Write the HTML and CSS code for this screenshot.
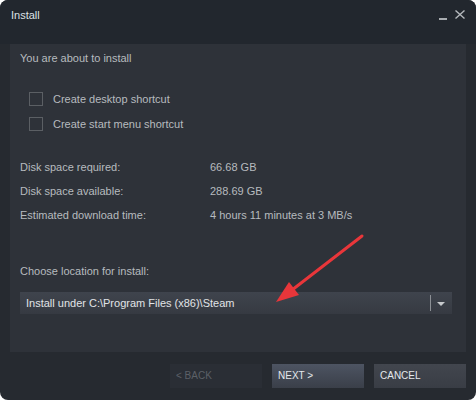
FILE: index.html
```html
<!DOCTYPE html>
<html>
<head>
<meta charset="utf-8">
<link rel="stylesheet" href="styles.css">
</head>
<body>
<div class="window">
  <div class="titlebar">
    <span class="title">Install</span>
    <div class="controls">
      <span class="min"></span>
      <svg class="close" width="10" height="9" viewBox="0 0 10 9"><path d="M0.5 0.5 L9.5 8.5 M9.5 0.5 L0.5 8.5" stroke="#b3b7bb" stroke-width="1.4" fill="none"/></svg>
    </div>
  </div>
  <div class="panel">
    <div class="intro">You are about to install</div>
    <div class="options">
      <label class="opt"><span class="box"></span>Create desktop shortcut</label>
      <label class="opt"><span class="box"></span>Create start menu shortcut</label>
    </div>
    <div class="info">
      <div class="row"><span class="key">Disk space required:</span><span class="val">66.68 GB</span></div>
      <div class="row"><span class="key">Disk space available:</span><span class="val">288.69 GB</span></div>
      <div class="row"><span class="key">Estimated download time:</span><span class="val">4 hours 11 minutes at 3 MB/s</span></div>
    </div>
    <div class="choose">Choose location for install:</div>
    <div class="dropdown">
      <span class="dd-text">Install under C:\Program Files (x86)\Steam</span>
      <span class="dd-sep"></span>
      <span class="dd-arrow"></span>
    </div>
  </div>
  <div class="footer">
    <div class="btn back">&lt; BACK</div>
    <div class="btn next">NEXT &gt;</div>
    <div class="btn cancel">CANCEL</div>
  </div>
  <svg class="annot" width="476" height="400" viewBox="0 0 476 400">
    <line x1="362" y1="236" x2="292" y2="290" stroke="#e8363a" stroke-width="3" stroke-linecap="round"/>
    <polygon points="276,302 289,282 299,295" fill="#e8363a"/>
  </svg>
</div>
</body>
</html>
```
FILE: styles.css
```css
html, body {
  margin: 0;
  padding: 0;
  background: #ffffff;
}
body {
  font-family: "Liberation Sans", Arial, sans-serif;
  font-size: 11px;
}
.window {
  position: relative;
  width: 476px;
  height: 400px;
  background: #262a30;
  border-radius: 8px;
  overflow: hidden;
  display: flex;
  flex-direction: column;
}
.titlebar {
  height: 44px;
  flex: none;
  background: #22272e;
  display: flex;
  justify-content: space-between;
  align-items: flex-start;
  padding: 8px 11px 0 11px;
  box-sizing: border-box;
}
.title {
  color: #dde2e7;
  font-size: 11px;
  line-height: 14px;
}
.controls {
  display: flex;
  align-items: flex-start;
  gap: 8px;
  padding-top: 2px;
}
.min {
  display: block;
  width: 8px;
  height: 2px;
  background: #a9adb1;
  margin-top: 8px;
}
.close {
  display: block;
}
.panel {
  margin: 0 10px;
  height: 308px;
  flex: none;
  background: #2e3239;
  padding: 7px 14px 0 10px;
  box-sizing: border-box;
  color: #b7bbbf;
}
.intro {
  line-height: 14px;
}
.options {
  margin: 27px 0 0 9px;
  display: flex;
  flex-direction: column;
  gap: 11px;
}
.opt {
  display: flex;
  align-items: center;
  gap: 10px;
  line-height: 14px;
}
.box {
  width: 14px;
  height: 14px;
  box-sizing: border-box;
  border: 1px solid #5b5f64;
  flex: none;
}
.info {
  margin-top: 24px;
}
.row {
  display: flex;
  line-height: 24px;
}
.key {
  width: 190px;
  flex: none;
}
.choose {
  margin-top: 37px;
  line-height: 14px;
}
.dropdown {
  margin-top: 14px;
  height: 22px;
  background: linear-gradient(#3f444d, #363a42);
  display: flex;
  align-items: center;
  padding-left: 6px;
}
.dd-text {
  flex: 1;
  color: #e1e4e7;
}
.dd-sep {
  width: 1px;
  height: 16px;
  background: #8c9095;
}
.dd-arrow {
  width: 0;
  height: 0;
  border-left: 4px solid transparent;
  border-right: 4px solid transparent;
  border-top: 4px solid #c6c9cc;
  margin: 2px 7px 0 6px;
}
.footer {
  display: flex;
  justify-content: flex-end;
  gap: 10px;
  padding: 12px 10px 0 0;
}
.btn {
  width: 92px;
  height: 24px;
  box-sizing: border-box;
  padding-left: 6px;
  line-height: 24px;
  font-size: 10px;
}
.back {
  background: #2a2e35;
  color: #5c6067;
}
.next {
  background: linear-gradient(#4d5462, #3a3f49);
  color: #e4e8ec;
}
.cancel {
  background: linear-gradient(#42464e, #393d45);
  color: #e4e8ec;
}
.annot {
  position: absolute;
  left: 0;
  top: 0;
  pointer-events: none;
}
```
